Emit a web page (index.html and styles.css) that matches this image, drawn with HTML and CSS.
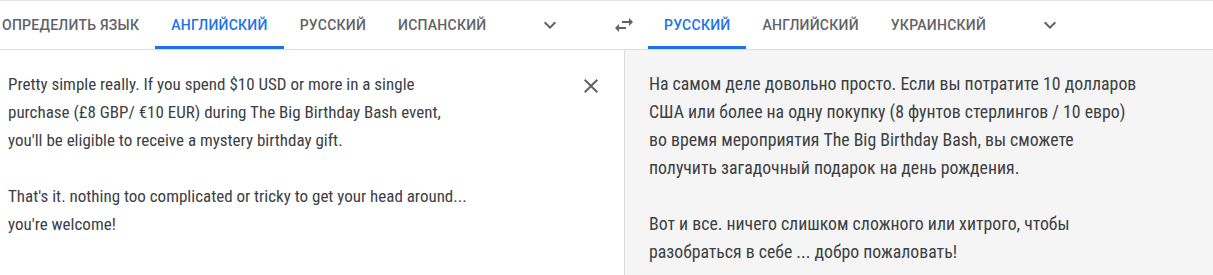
FILE: index.html
```html
<!DOCTYPE html>
<html lang="ru">
<head>
<meta charset="utf-8">
<link rel="stylesheet" href="styles.css">
</head>
<body>
<div class="app">
  <div class="header">
    <div class="side side-left">
      <div class="tabs tabs-left">
        <div class="tab">Определить язык</div>
        <div class="tab active">Английский</div>
        <div class="tab">Русский</div>
        <div class="tab">Испанский</div>
      </div>
      <div class="icon-btn">
        <svg viewBox="0 0 24 24" width="24" height="24"><path d="M16.59 8.59L12 13.17 7.41 8.59 6 10l6 6 6-6z"/></svg>
      </div>
    </div>
    <div class="icon-btn swap">
      <svg viewBox="0 0 24 24" width="24" height="24"><path d="M6.99 11L3 15l3.99 4v-3H14v-2H6.99v-3zM21 9l-3.99-4v3H10v2h7.01v3L21 9z"/></svg>
    </div>
    <div class="side side-right">
      <div class="tabs">
        <div class="tab active">Русский</div>
        <div class="tab">Английский</div>
        <div class="tab">Украинский</div>
      </div>
      <div class="icon-btn">
        <svg viewBox="0 0 24 24" width="24" height="24"><path d="M16.59 8.59L12 13.17 7.41 8.59 6 10l6 6 6-6z"/></svg>
      </div>
    </div>
  </div>
  <div class="panels">
    <div class="panel source">
      <div class="text text-source">
        <p>Pretty simple really. If you spend $10 USD or more in a single purchase (£8 GBP/ €10 EUR) during The Big Birthday Bash event, you'll be eligible to receive a mystery birthday gift.</p>
        <p>That's it. nothing too complicated or tricky to get your head around... you're welcome!</p>
      </div>
      <div class="clear">
        <svg viewBox="0 0 24 24" width="24" height="24"><path d="M19 6.41L17.59 5 12 10.59 6.41 5 5 6.41 10.59 12 5 17.59 6.41 19 12 13.41 17.59 19 19 17.59 13.41 12z"/></svg>
      </div>
    </div>
    <div class="panel target">
      <div class="text text-target">
        <p>На самом деле довольно просто. Если вы потратите 10 долларов<br>США или более на одну покупку (8 фунтов стерлингов / 10 евро)<br>во время мероприятия The Big Birthday Bash, вы сможете<br>получить загадочный подарок на день рождения.</p>
        <p>Вот и все. ничего слишком сложного или хитрого, чтобы<br>разобраться в себе ... добро пожаловать!</p>
      </div>
    </div>
  </div>
</div>
</body>
</html>
```

FILE: styles.css
```css
* { box-sizing: border-box; }
html, body { margin: 0; padding: 0; background: #fff; }
body { font-family: Roboto, "Noto Sans", Arial, sans-serif; overflow: hidden; }

.app {
  width: 1213px;
  height: 275px;
  border-top: 1px solid #e3e3e3;
  display: flex;
  flex-direction: column;
}

.header {
  display: flex;
  height: 49px;
  border-bottom: 1px solid #dadce0;
  flex: none;
}

.side { display: flex; align-items: stretch; }
.side-left { width: 600px; overflow: hidden; }
.tabs { display: flex; align-items: stretch; }
.tabs-left { margin-left: -14px; }

.tab {
  padding: 0 16px;
  display: flex;
  align-items: center;
  font-size: 14px;
  font-weight: 500;
  text-transform: uppercase;
  color: #5f6368;
  letter-spacing: 0.25px;
  white-space: nowrap;
  border-bottom: 3px solid transparent;
  padding-top: 3px;
}
.tab.active { color: #1a73e8; border-bottom-color: #1a73e8; }

.icon-btn {
  width: 48px;
  margin-left: 24px;
  display: flex;
  align-items: center;
  justify-content: center;
  fill: #5f6368;
}
.icon-btn.swap { margin-left: 0; }

.panels { display: flex; flex: 1; }
.panel { position: relative; }
.source { width: 624px; background: #fff; }
.target {
  flex: 1;
  background: #f5f5f5;
  border-left: 1px solid #dadce0;
}

.text {
  font-family: "Roboto Condensed", "Liberation Sans Narrow", Roboto, sans-serif;
  font-size: 17px;
  line-height: 28px;
  color: #3c4043;
  padding-top: 20px;
}
.text p { margin: 0 0 28px 0; }
.text-source { padding-left: 8px; width: 475px; }
.text-target { padding-left: 24px; width: 580px; font-size: 17.8px; }

.clear {
  position: absolute;
  left: 579px;
  top: 24px;
  width: 24px;
  height: 24px;
  fill: #5f6368;
}
```
